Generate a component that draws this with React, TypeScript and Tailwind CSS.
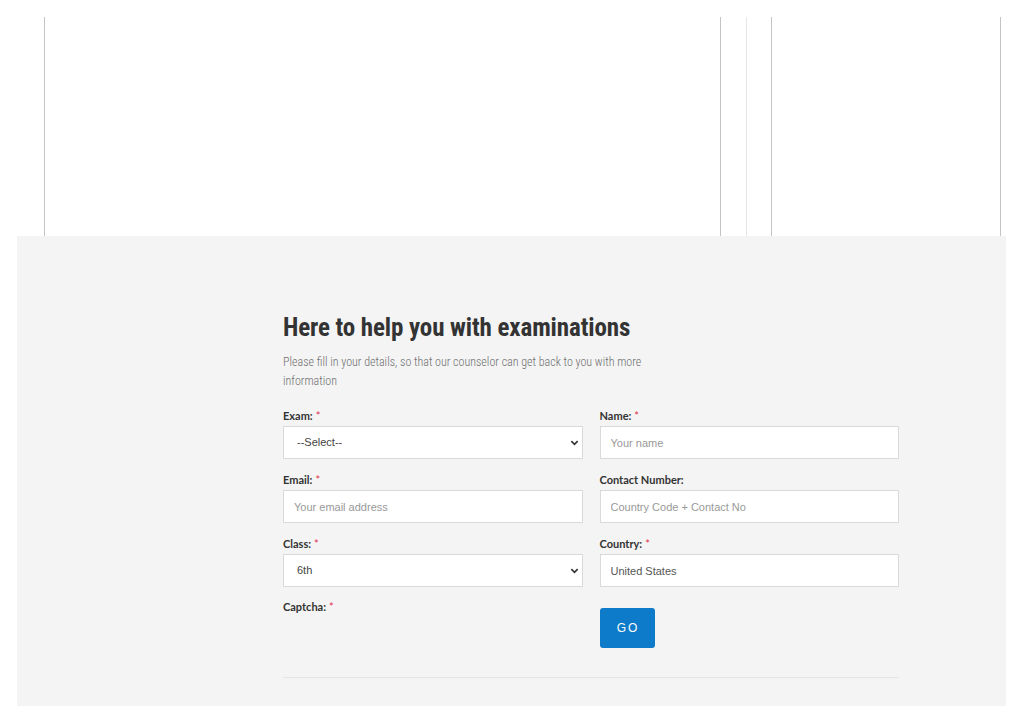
import React from "react";

const labelFont = { fontFamily: 'Lato, "Open Sans", Arial, sans-serif' };

function Label({ text, req }: { text: string; req?: boolean }) {
  return (
    <div className="h-[14px] mb-[3px] text-[11px] leading-[14px] font-bold text-[#333]" style={labelFont}>
      {text}
      {req && <span className="text-[#e0314b] font-normal ml-[3px]">*</span>}
    </div>
  );
}

function Field({ label, req, children }: { label: string; req?: boolean; children: React.ReactNode }) {
  return (
    <div className="flex flex-col">
      <Label text={label} req={req} />
      {children}
    </div>
  );
}

const inputCls =
  "w-full h-[33px] bg-white border border-[#d9d9d9] px-[10px] text-[11px] text-[#555] outline-none placeholder:text-[#999] font-['Liberation_Sans',Arial,sans-serif]";

function SelectBox({ value }: { value: string }) {
  return (
    <div className="relative w-full h-[33px] bg-white border border-[#d9d9d9] flex items-center pl-[13px] pr-[3px] text-[11px] text-[#444] font-['Liberation_Sans',Arial,sans-serif]">
      <span className="flex-1">{value}</span>
      <svg width="9" height="9" viewBox="0 0 10 10" className="text-[#333]">
        <path d="M1.5 3.5 L5 7 L8.5 3.5" fill="none" stroke="currentColor" strokeWidth="1.8" />
      </svg>
    </div>
  );
}

export default function App() {
  return (
    <div className="w-[1024px] min-h-[723px] bg-white">
      <div className="flex h-[236px] pt-[17px]">
        <div className="ml-[44px] w-[677px] border-x border-[#c4c4c4]" />
        <div className="w-[26px] border-r border-[#e6e6e6]" />
        <div className="w-[25px] border-r border-[#c4c4c4]" />
        <div className="w-[229px] border-r border-[#c4c4c4]" />
      </div>
      <div className="ml-[17px] w-[989px] h-[470px] bg-[#f4f4f4] pt-[77px]">
        <div className="ml-[266px] w-[616px]">
          <h2
            className="text-[25px] leading-[30px] font-bold text-[#333] tracking-[-0.1px]"
            style={{ fontFamily: '"Roboto Condensed", "Liberation Sans Narrow", "DejaVu Sans Condensed", Roboto, sans-serif' }}
          >
            Here to help you with examinations
          </h2>
          <p
            className="mt-[10px] w-[380px] text-[12px] leading-[19px] text-[#6f6f6f]"
            style={{ fontFamily: '"Roboto Condensed", "Liberation Sans Narrow", "DejaVu Sans Condensed", Roboto, sans-serif', fontWeight: 300 }}
          >
            Please fill in your details, so that our counselor can get back to you with more information
          </p>
          <div className="mt-[18px] grid grid-cols-2 gap-x-[17px] gap-y-[14px]">
            <Field label="Exam:" req>
              <SelectBox value="--Select--" />
            </Field>
            <Field label="Name:" req>
              <input className={inputCls} placeholder="Your name" />
            </Field>
            <Field label="Email:" req>
              <input className={inputCls} placeholder="Your email address" />
            </Field>
            <Field label="Contact Number:">
              <input className={inputCls} placeholder="Country Code + Contact No" />
            </Field>
            <Field label="Class:" req>
              <SelectBox value="6th" />
            </Field>
            <Field label="Country:" req>
              <input className={inputCls} defaultValue="United States" />
            </Field>
            <div className="flex flex-col -mt-[1px]">
              <Label text="Captcha:" req />
            </div>
            <div className="pt-[7px]">
              <button
                className="w-[55px] h-[40px] rounded-[3px] bg-[#0d7bc9] text-white text-[12px] tracking-[2px] pl-[2px]"
                style={{ fontFamily: '"Liberation Sans", Arial, sans-serif' }}
              >
                GO
              </button>
            </div>
          </div>
          <div className="mt-[29px] h-px bg-[#e4e4e4] w-[616px]" />
        </div>
      </div>
    </div>
  );
}
